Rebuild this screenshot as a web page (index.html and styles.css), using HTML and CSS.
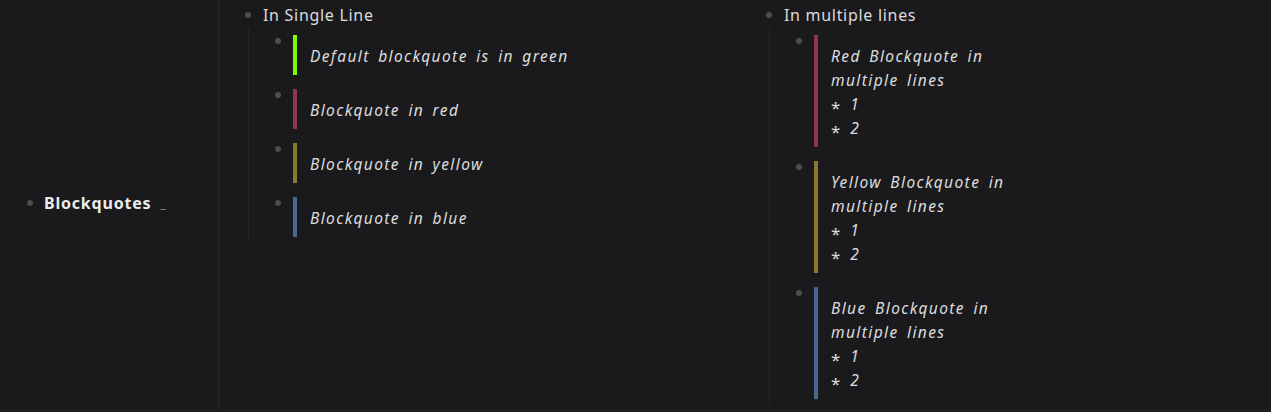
FILE: index.html
```html
<!DOCTYPE html>
<html>
<head>
<meta charset="utf-8">
<link rel="stylesheet" href="styles.css">
</head>
<body>
<div class="table">
  <div class="key">
    <span class="dot"></span>
    <span class="key-title">Blockquotes</span>
    <span class="cursor">_</span>
  </div>
  <div class="val">
    <div class="col">
      <div class="node">
        <div class="bullet"><span class="dot"></span></div>
        <div class="node-text">In Single Line</div>
      </div>
      <div class="children">
        <div class="item">
          <div class="bullet"><span class="dot"></span></div>
          <blockquote class="bq green">Default blockquote is in green</blockquote>
        </div>
        <div class="item">
          <div class="bullet"><span class="dot"></span></div>
          <blockquote class="bq red">Blockquote in red</blockquote>
        </div>
        <div class="item">
          <div class="bullet"><span class="dot"></span></div>
          <blockquote class="bq yellow">Blockquote in yellow</blockquote>
        </div>
        <div class="item">
          <div class="bullet"><span class="dot"></span></div>
          <blockquote class="bq blue">Blockquote in blue</blockquote>
        </div>
      </div>
    </div>
    <div class="col">
      <div class="node">
        <div class="bullet"><span class="dot"></span></div>
        <div class="node-text">In multiple lines</div>
      </div>
      <div class="children">
        <div class="item">
          <div class="bullet"><span class="dot"></span></div>
          <blockquote class="bq red">Red Blockquote in<br>multiple lines<br><span class="ast">*</span> 1<br><span class="ast">*</span> 2</blockquote>
        </div>
        <div class="item">
          <div class="bullet"><span class="dot"></span></div>
          <blockquote class="bq yellow">Yellow Blockquote in<br>multiple lines<br><span class="ast">*</span> 1<br><span class="ast">*</span> 2</blockquote>
        </div>
        <div class="item">
          <div class="bullet"><span class="dot"></span></div>
          <blockquote class="bq blue">Blue Blockquote in<br>multiple lines<br><span class="ast">*</span> 1<br><span class="ast">*</span> 2</blockquote>
        </div>
      </div>
    </div>
  </div>
</div>
</body>
</html>
```

FILE: styles.css
```css
html, body {
  margin: 0;
  padding: 0;
  background: #1a1a1c;
}
body {
  font-family: "Noto Sans", "Open Sans", sans-serif;
  color: #dcdcdc;
  font-size: 16px;
}
.table {
  display: flex;
  height: 411px;
  border-bottom: 1px solid #222224;
  border-right: 1px solid #222224;
  box-sizing: border-box;
  width: 1271px;
}
.key {
  width: 219px;
  flex: none;
  border-right: 1px solid #262628;
  display: flex;
  align-items: center;
  padding-left: 27px;
  padding-bottom: 5px;
  box-sizing: border-box;
}
.key .dot {
  margin-right: 11px;
}
.key-title {
  font-weight: 700;
  font-size: 16px;
  letter-spacing: 0.8px;
  color: #ececec;
}
.cursor {
  color: #8a8a8a;
  font-size: 12px;
  margin-left: 9px;
  margin-top: 2px;
}
.dot {
  display: block;
  width: 6px;
  height: 6px;
  border-radius: 50%;
  background: #4b4e4b;
}
.val {
  display: flex;
  padding-left: 20px;
  padding-top: 3px;
}
.col {
  width: 521px;
  flex: none;
}
.node {
  display: flex;
  line-height: 24px;
}
.bullet {
  width: 18px;
  flex: none;
  display: flex;
  justify-content: center;
  padding-top: 9px;
  box-sizing: border-box;
}
.node-text {
  margin-left: 6px;
  font-size: 16px;
  letter-spacing: 0.7px;
  color: #dcdcdc;
}
.children {
  margin-left: 9px;
  border-left: 1px solid #262628;
  padding: 8px 0 5px 20px;
  display: flex;
  flex-direction: column;
  gap: 14px;
}
.item {
  display: flex;
}
.item .bullet {
  padding-top: 3px;
}
.bq {
  margin: 0 0 0 6px;
  padding: 9px 0 7px 13px;
  border-left: 4px solid #7cfc00;
  font-style: italic;
  line-height: 24px;
  font-size: 15.5px;
  letter-spacing: 1.4px;
  word-spacing: 3px;
  color: #dcdcdc;
}
.ast {
  display: inline-block;
  font-style: normal;
  font-size: 17px;
  transform: translateY(4px);
}
.bq.green { border-left-color: #7cfc00; }
.bq.red { border-left-color: #8c3650; }
.bq.yellow { border-left-color: #867a30; }
.bq.blue { border-left-color: #4c6690; }
```
